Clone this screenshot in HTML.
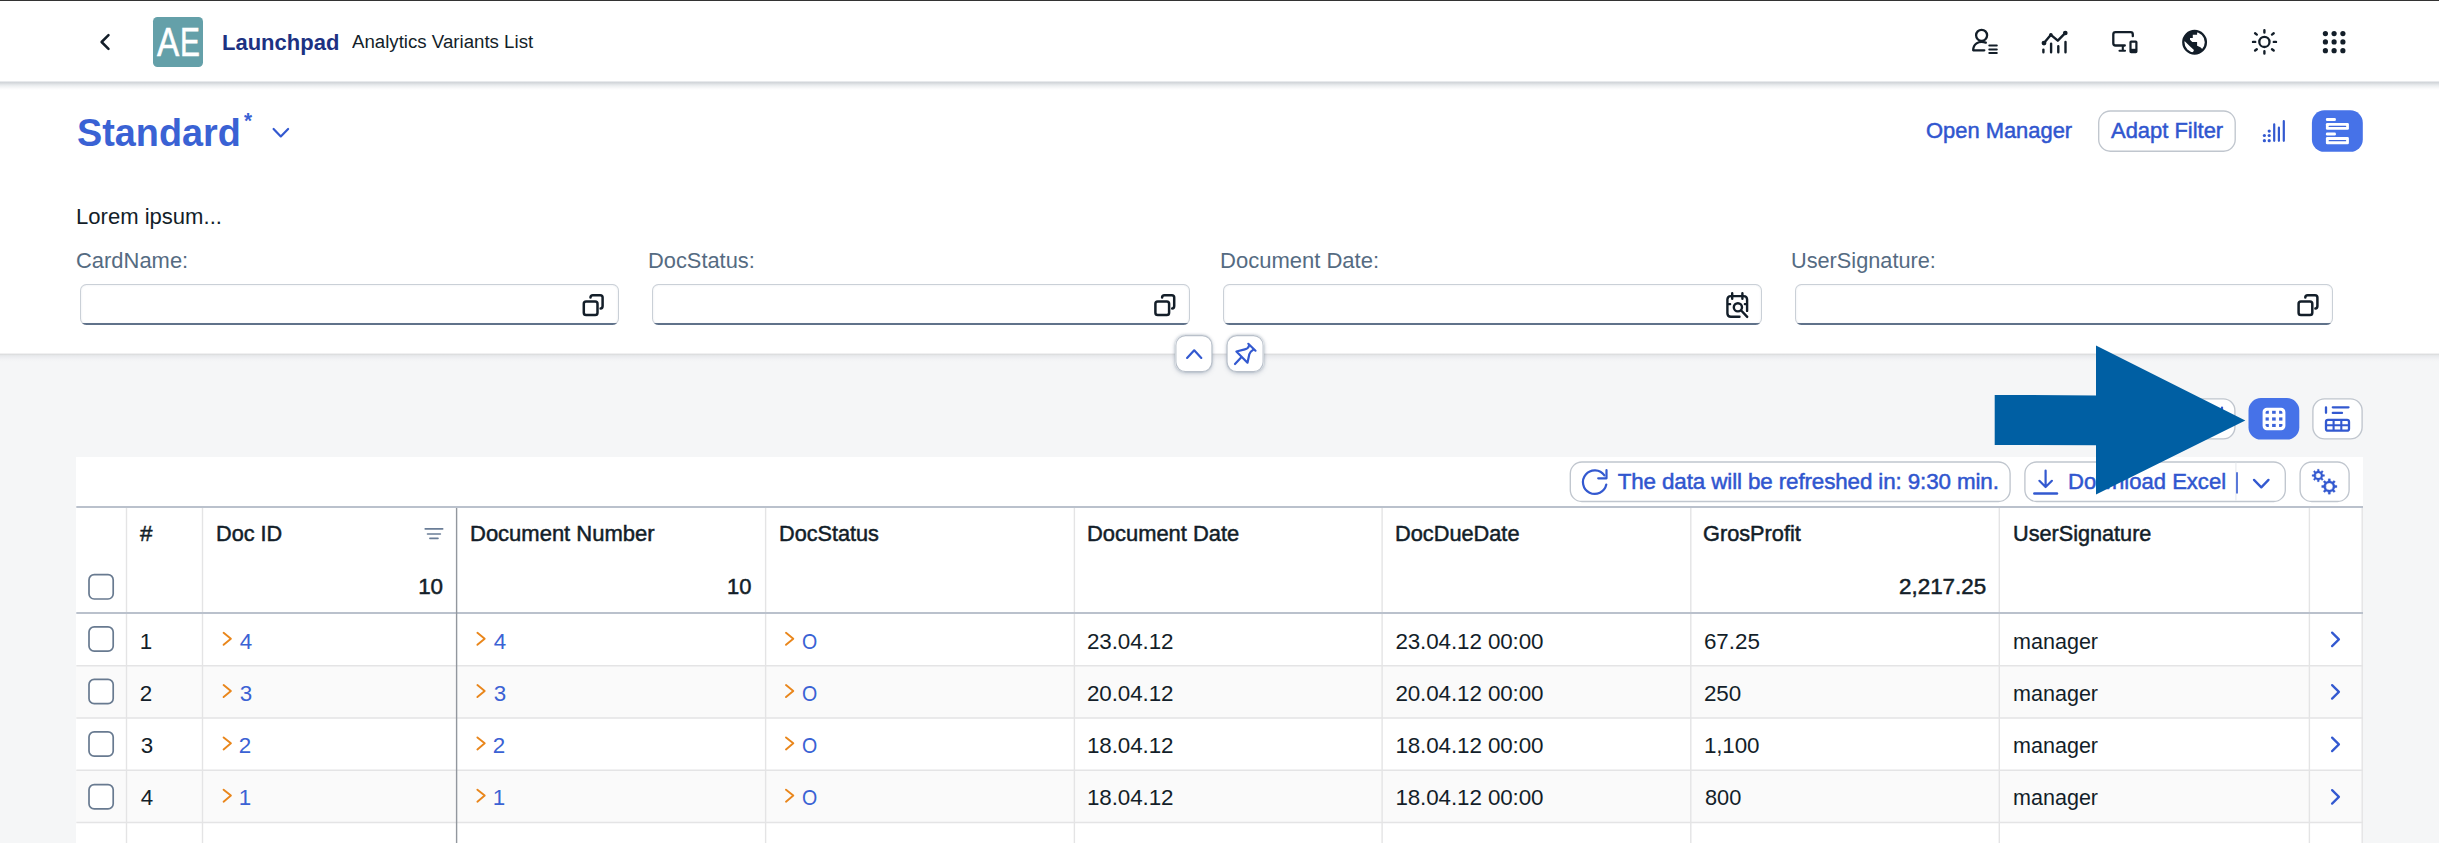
<!DOCTYPE html>
<html lang="en">
<head>
<meta charset="utf-8">
<title>Analytics Variants List</title>
<style>
html,body{margin:0;padding:0;}
body{width:2439px;height:843px;overflow:hidden;position:relative;background:#f5f6f7;font-family:"Liberation Sans",sans-serif;color:#131e29;}
.abs,.t,svg.i{position:absolute;}
.t{white-space:nowrap;line-height:1;}
.sb{-webkit-text-stroke:0.5px currentColor;}
#shell{left:0;top:0;width:2439px;height:81px;background:#fff;z-index:3;}
#shellsh{left:0;top:80px;width:2439px;height:10px;z-index:3;background:linear-gradient(#fff 0,#fff .8px,#e4e6e9 1.6px,#d2d6da 2.3px,#d5d8dc 3px,#e1e4e7 4.2px,#eef0f2 6px,#fafafb 8.5px,#fff 10px);}
#topline{left:0;top:0;width:2439px;height:1px;background:#333;z-index:4;}
#head{left:0;top:82px;width:2439px;height:271px;background:#fff;z-index:1;}
#headsh{left:0;top:352px;width:2439px;height:10px;z-index:1;background:linear-gradient(#fff 0,#fff .8px,#eeeeef 1.6px,#dcddde 2.4px,#e5e7e9 3.3px,#ecedf0 5px,#f2f3f5 7.5px,#f5f6f7 10px);}
#logo{left:152.5px;top:16.6px;width:50.7px;height:50.6px;border-radius:4.5px;background:#64a0a9;z-index:5;overflow:hidden;}
#logo span{position:absolute;top:5.6px;font-size:41.1px;line-height:1;color:#fff;transform-origin:0 0;-webkit-text-stroke:.6px #fff;}
.inp{box-sizing:border-box;height:40.9px;top:284.2px;width:538.6px;background:#fff;border-radius:6.5px;box-shadow:inset 0 0 0 1px rgba(85,107,129,.22),inset 0 0 2px 1px rgba(85,107,129,.16);overflow:hidden;z-index:2;}
.inp::after{content:"";position:absolute;left:0;right:0;bottom:0;height:2.2px;background:#60728a;}
.rbtn{width:37px;height:37px;top:335.1px;background:#fff;border-radius:10px;box-shadow:0 0 3px rgba(85,107,130,.45),0 2px 5px rgba(85,107,130,.22);z-index:3;}
#tbl{left:76.3px;top:457px;width:2286.7px;height:386px;background:#fff;}
.alt{left:76.3px;width:2286.7px;height:51.4px;background:#fafafa;}
.z5{z-index:5;}
</style>
</head>
<body>
<!-- shell bar -->
<div id="topline" class="abs"></div>
<div id="shell" class="abs"></div>
<div id="shellsh" class="abs"></div>
<div id="logo" class="abs"><span style="left:4.6px;transform:scaleX(.81)">A</span><span style="left:27.1px;transform:scaleX(.725)">E</span></div>
<!-- dynamic page header -->
<div id="head" class="abs"></div>
<div id="headsh" class="abs"></div>
<div class="abs inp" style="left:80px"></div>
<div class="abs inp" style="left:651.6px"></div>
<div class="abs inp" style="left:1223.2px"></div>
<div class="abs inp" style="left:1794.8px"></div>
<div class="abs rbtn" style="left:1175.4px"></div>
<div class="abs rbtn" style="left:1226.6px"></div>
<!-- table -->
<div id="tbl" class="abs"></div>
<div class="abs alt" style="top:666px;height:52px"></div>
<div class="abs alt" style="top:770px;height:52px"></div>
<svg class="i" style="left:0;top:0;z-index:5" width="2439" height="843" viewBox="0 0 2439 843" fill="none" stroke-linecap="round" stroke-linejoin="round">
<!-- table grid lines -->
<g stroke-linecap="butt">
<path d="M76.3 665.8 H2363 M76.3 718 H2363 M76.3 770.3 H2363 M76.3 822.5 H2363" stroke="#e4e4e5" stroke-width="1.5"/>
<path d="M126.5 508 V843 M202.5 508 V843 M765.6 508 V843 M1074.4 508 V843 M1382.1 508 V843 M1690.8 508 V843 M1999.3 508 V843 M2309.4 508 V843 M2362.2 508 V843" stroke="#e4e4e5" stroke-width="1.4"/>
<path d="M76.3 507 H2363 M76.3 613.1 H2363" stroke="#bac1cc" stroke-width="2"/>
<path d="M456.6 508 V843" stroke="#92979e" stroke-width="1.4"/>
</g>
<!-- outlines: buttons, toggles, checkboxes -->
<g stroke="#c0c6ce" stroke-width="1.35" fill="#fff" stroke-linecap="butt">
<rect x="2098.7" y="111" width="136.5" height="40.2" rx="11.6"/>
<rect x="2185.7" y="398.9" width="49.2" height="40" rx="11.6"/>
<rect x="2312.9" y="398.9" width="49.2" height="40" rx="11.6"/>
<rect x="1570.3" y="462" width="439.8" height="39.5" rx="11.6"/>
<rect x="2024.9" y="462" width="260.4" height="39.5" rx="11.6"/>
<rect x="2300.1" y="462" width="49" height="39.5" rx="11.6"/>
</g>
<g fill="#4672e8" stroke="none">
<rect x="2311.9" y="110.3" width="50.9" height="41.5" rx="12.4"/>
<rect x="2248.5" y="398" width="50.8" height="41.6" rx="12.4"/>
</g>
<path d="M2235.9 463 V500.5" stroke="#e9ecef" stroke-width="1.2"/>
<path d="M2237 472.2 V493.6" stroke="#3359d0" stroke-width="1.6" stroke-linecap="butt"/>
<g stroke="#b9c0ca" stroke-width="1.1" fill="none"><rect x="1175.9" y="335.6" width="36" height="36" rx="9.6"/><rect x="1227.1" y="335.6" width="36" height="36" rx="9.6"/></g>
<g stroke="#687a90" stroke-width="1.7" fill="#fff">
<rect x="89" y="574.7" width="24.2" height="24.3" rx="5.2"/>
<rect x="89" y="626.9" width="24.2" height="24.3" rx="5.2"/>
<rect x="89" y="679.4" width="24.2" height="24.3" rx="5.2"/>
<rect x="89" y="731.9" width="24.2" height="24.3" rx="5.2"/>
<rect x="89" y="784.6" width="24.2" height="24.3" rx="5.2"/>
</g>
<!-- shell: back -->
<path d="M108.5 35.2 L101.6 42 L108.5 48.9" stroke="#131e29" stroke-width="2.5"/>
<g stroke="#131e29" stroke-width="2.3">
<!-- user list -->
<circle cx="1981.6" cy="35.3" r="5.5"/>
<path d="M1985.8 42.6 C1978 40.2 1973.2 44.5 1973.2 50.3 L1984.3 50.3"/>
<path d="M1989.3 45.6 H1996.8 M1989.3 49.4 H1996.8 M1989.3 53.1 H1996.8" stroke-width="2"/>
<!-- chart -->
<path d="M2044 43.1 L2050.9 34.8 L2057.8 40.7 L2065.4 32.9" stroke-width="2.4"/>
<circle cx="2044" cy="43.1" r="1.3" fill="#131e29"/><circle cx="2065.3" cy="33" r="1.2" fill="#131e29"/><circle cx="2050.9" cy="34.9" r=".7" fill="#131e29"/>
<path d="M2043.4 49.6 V52.3 M2051.1 43.6 V52.3 M2058.3 46.2 V52.3 M2065.5 41.9 V52.3" stroke-width="2.4"/>
<!-- devices -->
<path d="M2132.8 36.2 V34.4 Q2132.8 32.2 2130.6 32.2 H2115.5 Q2113.3 32.2 2113.3 34.4 V43.3 Q2113.3 45.5 2115.5 45.5 H2124.8"/>
<path d="M2122.8 46.5 V50.5 M2119.5 50.7 H2125" stroke-width="2.1"/>
<rect x="2130.5" y="41.6" width="5.9" height="10.6" rx=".6" stroke-width="2.2"/>
<rect x="2130.5" y="48.8" width="5.9" height="3.4" fill="#131e29" stroke="none"/>
<!-- globe -->
<circle cx="2194.6" cy="42.2" r="11.3"/>
<!-- sun -->
<circle cx="2264.4" cy="41.9" r="5.1"/>
<path d="M2264.4 30.3 V32.5 M2264.4 51.3 V53.5 M2253 41.9 H2255.2 M2273.8 41.9 H2276 M2255.1 33.3 L2256.8 34.6 M2273.7 33.3 L2272 34.6 M2255.1 50.5 L2256.8 49.2 M2273.7 50.5 L2272 49.2" stroke-width="2.4"/>
</g>
<clipPath id="gc"><circle cx="2194.6" cy="42.2" r="11.3"/></clipPath>
<polygon clip-path="url(#gc)" fill="#131e29" points="2197.1,28 2197.1,34.8 2192.8,34.8 2192.8,38.1 2190,38.1 2190,39.8 2192.3,41.9 2197.1,41.9 2197.1,45.7 2200.4,47.2 2203.3,50 2209,56 2193,56 2192.8,52.4 2194,50 2190.4,46.7 2181,37.7 2181,28"/>
<!-- grid dots -->
<g fill="#131e29">
<circle cx="2325.4" cy="33.6" r="2.6"/><circle cx="2334.1" cy="33.6" r="2.6"/><circle cx="2342.9" cy="33.6" r="2.6"/>
<circle cx="2325.4" cy="41.9" r="2.6"/><circle cx="2334.1" cy="41.9" r="2.6"/><circle cx="2342.9" cy="41.9" r="2.6"/>
<circle cx="2325.4" cy="50.7" r="2.6"/><circle cx="2334.1" cy="50.7" r="2.6"/><circle cx="2342.9" cy="50.7" r="2.6"/>
</g>
<!-- title chevron -->
<path d="M273.6 129 L280.8 136.4 L288.1 129" stroke="#3359d0" stroke-width="2.2"/>
<!-- bar chart icon -->
<g fill="#3359d0"><circle cx="2264.4" cy="135.5" r="1.6"/><circle cx="2264.4" cy="140.7" r="1.6"/><circle cx="2269.2" cy="131.1" r="1.6"/><circle cx="2269.2" cy="135.5" r="1.6"/><circle cx="2269.2" cy="140.7" r="1.6"/></g>
<path d="M2274.2 124.3 V140.8 M2278.9 127.7 V140.8 M2283.8 121.2 V140.8" stroke="#3359d0" stroke-width="2.2"/>
<!-- horizontal bars (white on blue) -->
<g fill="#fff"><rect x="2325.9" y="118" width="10" height="2.9" rx="1.2"/><rect x="2325.9" y="122.9" width="23" height="6.9" rx="1.3"/><rect x="2325.9" y="132.6" width="10" height="2.9" rx="1.2"/><rect x="2325.9" y="137.1" width="23" height="7.1" rx="1.3"/></g>
<path d="M2329.2 126.4 H2345.6 M2329.2 140.7 H2345.6" stroke="#3f66dc" stroke-width="1.3"/>
<!-- value help icons -->
<g id="vh" stroke="#131e29" stroke-width="2.5">
<rect x="583.8" y="301.4" width="13.7" height="13.7" rx="2.3"/>
<path d="M590.5 297.6 Q590.5 295.2 592.9 295.2 H600.2 Q602.6 295.2 602.6 297.6 V306.1 Q602.6 308.5 600.6 308.5"/>
</g>
<use href="#vh" x="571.6"/><use href="#vh" x="1714.8"/>
<!-- calendar search -->
<g stroke="#131e29" stroke-width="2.4">
<path d="M1747.1 310.9 V299.6 Q1747.1 296.1 1743.6 296.1 H1730.9 Q1727.4 296.1 1727.4 299.6 V313.3 Q1727.4 316.8 1730.9 316.8 H1739.5"/>
<path d="M1732.2 293.2 V298.7 M1742.4 293.2 V298.7"/>
<path d="M1728.6 304.2 H1730.2 M1744.8 304.2 H1746.4" stroke-width="2.2"/>
<circle cx="1737.9" cy="307.3" r="4.1"/>
<path d="M1741.2 310.5 L1747.2 316.9"/>
</g>
<!-- collapse + pin -->
<g stroke="#3359d0" stroke-width="2.2">
<path d="M1187.1 357.9 L1194.2 350.3 L1201.3 357.9"/>
<path d="M1248.3 343.8 L1255.5 350.7"/>
<path d="M1249 345.6 C1248.6 347.6 1247 349 1244.8 349.4 L1236.4 351.5 L1247.5 362.7 L1249.3 354.2 C1249.7 352.3 1251 351 1253.4 349.6"/>
<path d="M1241.1 357.4 L1235 364"/>
</g>
<!-- table view toggle icons -->
<rect x="2262.6" y="407.8" width="22.8" height="22.5" rx="4.2" fill="#fff"/>
<g fill="#3d64da">
<path d="M2265.6 413.8 V412.6 Q2265.6 410.8 2267.4 410.8 H2268.8 V413.8Z"/><rect x="2272.1" y="410.8" width="3.6" height="3"/><path d="M2279.1 410.8 H2280.6 Q2282.4 410.8 2282.4 412.6 V413.8 H2279.1Z"/>
<rect x="2265.6" y="417.4" width="3.2" height="3.2"/><rect x="2272.1" y="417.4" width="3.6" height="3.2"/><rect x="2279.1" y="417.4" width="3.3" height="3.2"/>
<path d="M2265.6 423.9 H2268.8 V427 H2267.4 Q2265.6 427 2265.6 425.2Z"/><rect x="2272.1" y="423.9" width="3.6" height="3.1"/><path d="M2279.1 423.9 H2282.4 V425.2 Q2282.4 427 2280.6 427 H2279.1Z"/>
</g>
<g stroke="#3359d0" stroke-width="2.3">
<path d="M2326 407.3 V412.8 M2332.8 407.3 H2348.5 M2332.8 412.9 H2342"/>
<rect x="2326" y="419.8" width="23" height="10.9" rx="2"/>
<path d="M2326 425.3 H2349 M2333.6 419.8 V430.7 M2341.3 419.8 V430.7" stroke-width="2.1" stroke-linecap="butt"/>
</g>
<!-- hidden toggle glyph -->
<path d="M2222 407.6 V430" stroke="#3359d0" stroke-width="2.2"/>
<!-- refresh -->
<g stroke="#3359d0" stroke-width="2.2">
<path d="M1606.3 484.6 A11.8 11.8 0 1 1 1604.4 475.3"/>
<path d="M1606.5 470.2 V478.3 H1598.2"/>
<!-- download -->
<path d="M2045.6 470.6 V486.8 M2039.4 480.8 L2045.6 487 L2051.9 480.8"/>
<path d="M2034.3 493.5 H2057" stroke-width="2.4"/>
<path d="M2254 479.9 L2261.3 487.4 L2268.5 479.9" stroke-width="2.3"/>
</g>
<!-- gears -->
<path fill="#3359d0" fill-rule="evenodd" stroke="#3359d0" stroke-width=".3" stroke-linejoin="round" d="M2317.37 471.00 L2317.46 469.26 L2319.14 469.26 L2319.23 471.00 L2320.83 471.66 L2322.12 470.49 L2323.31 471.68 L2322.14 472.97 L2322.80 474.57 L2324.54 474.66 L2324.54 476.34 L2322.80 476.43 L2322.14 478.03 L2323.31 479.32 L2322.12 480.51 L2320.83 479.34 L2319.23 480.00 L2319.14 481.74 L2317.46 481.74 L2317.37 480.00 L2315.77 479.34 L2314.48 480.51 L2313.29 479.32 L2314.46 478.03 L2313.80 476.43 L2312.06 476.34 L2312.06 474.66 L2313.80 474.57 L2314.46 472.97 L2313.29 471.68 L2314.48 470.49 L2315.77 471.66Z M2315.70 475.50 a2.6 2.6 0 1 0 5.2 0 a2.6 2.6 0 1 0 -5.2 0Z"/>
<path fill="#3359d0" fill-rule="evenodd" stroke="#3359d0" stroke-width=".3" stroke-linejoin="round" d="M2328.14 480.92 L2328.27 478.87 L2330.33 478.87 L2330.46 480.92 L2332.43 481.74 L2333.97 480.38 L2335.42 481.83 L2334.06 483.37 L2334.88 485.34 L2336.93 485.47 L2336.93 487.53 L2334.88 487.66 L2334.06 489.63 L2335.42 491.17 L2333.97 492.62 L2332.43 491.26 L2330.46 492.08 L2330.33 494.13 L2328.27 494.13 L2328.14 492.08 L2326.17 491.26 L2324.63 492.62 L2323.18 491.17 L2324.54 489.63 L2323.72 487.66 L2321.67 487.53 L2321.67 485.47 L2323.72 485.34 L2324.54 483.37 L2323.18 481.83 L2324.63 480.38 L2326.17 481.74Z M2325.75 486.50 a3.55 3.55 0 1 0 7.1 0 a3.55 3.55 0 1 0 -7.1 0Z"/>
<!-- column filter icon -->
<path d="M425.2 528.9 H442.7 M427.5 534 H440.4 M429.9 538.4 H438" stroke="#6a7d97" stroke-width="1.6"/>
<!-- row link chevrons -->
<g id="oc" stroke="#e9861b" stroke-width="1.9"><path d="M223.6 632.8 L230.9 638.7 L223.6 644.8"/><path d="M477.4 632.8 L484.7 638.7 L477.4 644.8"/><path d="M786 632.8 L793.3 638.7 L786 644.8"/></g>
<use href="#oc" y="52.3"/><use href="#oc" y="104.6"/><use href="#oc" y="156.9"/>
<g id="nv" stroke="#3359d0" stroke-width="2.3"><path d="M2332.1 632.6 L2338.9 639.4 L2332.1 646.1"/></g>
<use href="#nv" y="52.5"/><use href="#nv" y="105"/><use href="#nv" y="157.5"/>
</svg>
<!-- big annotation arrow -->
<svg class="i" style="left:1990px;top:340px;z-index:6" width="260" height="160" viewBox="1990 340 260 160"><polygon points="1994.7,394.9 2096,395.4 2096,345.4 2245.3,420.6 2096,494.6 2096,445.2 1994.7,445" fill="#005fa3"/></svg>

<div id="txt" class="abs z5" style="left:0;top:0">
<span class="t" style="left:222.02px;top:32.00px;font-size:22.4px;color:#1d3282;font-weight:700;transform:scaleX(0.9826);transform-origin:0 0;">Launchpad</span>
<span class="t" style="left:352.00px;top:32.00px;font-size:19.2px;color:#131e29;transform:scaleX(0.9726);transform-origin:0 0;">Analytics Variants List</span>
<span class="t" style="left:76.62px;top:114.00px;font-size:38.4px;color:#3a62d4;font-weight:700;transform:scaleX(0.9844);transform-origin:0 0;">Standard</span>
<span class="t" style="left:243.90px;top:110.00px;font-size:22.4px;color:#3a62d4;font-weight:700;transform:scaleX(0.9222);transform-origin:0 0;">*</span>
<span class="t sb" style="left:1926.02px;top:120.00px;font-size:22.4px;color:#3056cf;transform:scaleX(0.9784);transform-origin:0 0;">Open Manager</span>
<span class="t sb" style="left:2110.70px;top:120.00px;font-size:22.4px;color:#3056cf;transform:scaleX(0.9797);transform-origin:0 0;">Adapt Filter</span>
<span class="t" style="left:75.91px;top:206.00px;font-size:22.4px;color:#131e29;transform:scaleX(0.9852);transform-origin:0 0;">Lorem ipsum...</span>
<span class="t" style="left:76.02px;top:250.00px;font-size:22.4px;color:#556b82;transform:scaleX(0.9799);transform-origin:0 0;">CardName:</span>
<span class="t" style="left:648.13px;top:250.00px;font-size:22.4px;color:#556b82;transform:scaleX(0.9749);transform-origin:0 0;">DocStatus:</span>
<span class="t" style="left:1219.72px;top:250.00px;font-size:22.4px;color:#556b82;transform:scaleX(0.9833);transform-origin:0 0;">Document Date:</span>
<span class="t" style="left:1790.83px;top:250.00px;font-size:22.4px;color:#556b82;transform:scaleX(0.9699);transform-origin:0 0;">UserSignature:</span>
<span class="t sb" style="left:1617.70px;top:471.00px;font-size:22.4px;color:#3056cf;letter-spacing:-0.118px;">The data will be refreshed in: 9:30 min.</span>
<span class="t sb" style="left:2067.92px;top:471.00px;font-size:22.4px;color:#3056cf;transform:scaleX(0.9844);transform-origin:0 0;">Download Excel</span>
<span class="t sb" style="left:140.10px;top:523.00px;font-size:22.4px;color:#131e29;">#</span>
<span class="t sb" style="left:215.83px;top:523.00px;font-size:22.4px;color:#131e29;transform:scaleX(0.9664);transform-origin:0 0;">Doc ID</span>
<span class="t sb" style="left:470.12px;top:523.00px;font-size:22.4px;color:#131e29;transform:scaleX(0.9821);transform-origin:0 0;">Document Number</span>
<span class="t sb" style="left:778.63px;top:523.00px;font-size:22.4px;color:#131e29;transform:scaleX(0.9677);transform-origin:0 0;">DocStatus</span>
<span class="t sb" style="left:1087.42px;top:523.00px;font-size:22.4px;color:#131e29;transform:scaleX(0.9785);transform-origin:0 0;">Document Date</span>
<span class="t sb" style="left:1395.43px;top:523.00px;font-size:22.4px;color:#131e29;transform:scaleX(0.9713);transform-origin:0 0;">DocDueDate</span>
<span class="t sb" style="left:1703.43px;top:523.00px;font-size:22.4px;color:#131e29;transform:scaleX(0.9706);transform-origin:0 0;">GrosProfit</span>
<span class="t sb" style="left:2012.63px;top:523.00px;font-size:22.4px;color:#131e29;transform:scaleX(0.9670);transform-origin:0 0;">UserSignature</span>
<span class="t sb" style="left:418.20px;top:576.00px;font-size:22.4px;color:#131e29;letter-spacing:-0.153px;">10</span>
<span class="t sb" style="left:727.22px;top:576.00px;font-size:22.4px;color:#131e29;transform:scaleX(0.9807);transform-origin:0 0;">10</span>
<span class="t sb" style="left:1899.00px;top:576.00px;font-size:22.4px;color:#131e29;">2,217.25</span>
<span class="t" style="left:139.70px;top:631.00px;font-size:22.4px;color:#131e29;">1</span>
<span class="t" style="left:239.70px;top:631.00px;font-size:22.4px;color:#3a62d4;">4</span>
<span class="t" style="left:493.70px;top:631.00px;font-size:22.4px;color:#3a62d4;">4</span>
<span class="t" style="left:801.83px;top:631.00px;font-size:22.4px;color:#3a62d4;transform:scaleX(0.8750);transform-origin:0 0;">O</span>
<span class="t" style="left:1086.90px;top:631.00px;font-size:22.4px;color:#131e29;letter-spacing:-0.072px;">23.04.12</span>
<span class="t" style="left:1395.40px;top:631.00px;font-size:22.4px;color:#131e29;letter-spacing:-0.097px;">23.04.12 00:00</span>
<span class="t" style="left:1703.90px;top:631.00px;font-size:22.4px;color:#131e29;letter-spacing:0.030px;">67.25</span>
<span class="t" style="left:2012.94px;top:631.00px;font-size:22.4px;color:#131e29;transform:scaleX(0.9623);transform-origin:0 0;">manager</span>
<span class="t" style="left:139.70px;top:683.00px;font-size:22.4px;color:#131e29;">2</span>
<span class="t" style="left:239.70px;top:683.00px;font-size:22.4px;color:#3a62d4;">3</span>
<span class="t" style="left:493.70px;top:683.00px;font-size:22.4px;color:#3a62d4;">3</span>
<span class="t" style="left:801.83px;top:683.00px;font-size:22.4px;color:#3a62d4;transform:scaleX(0.8750);transform-origin:0 0;">O</span>
<span class="t" style="left:1086.90px;top:683.00px;font-size:22.4px;color:#131e29;letter-spacing:-0.072px;">20.04.12</span>
<span class="t" style="left:1395.40px;top:683.00px;font-size:22.4px;color:#131e29;letter-spacing:-0.097px;">20.04.12 00:00</span>
<span class="t" style="left:1703.90px;top:683.00px;font-size:22.4px;color:#131e29;">250</span>
<span class="t" style="left:2012.94px;top:683.00px;font-size:22.4px;color:#131e29;transform:scaleX(0.9623);transform-origin:0 0;">manager</span>
<span class="t" style="left:140.70px;top:735.00px;font-size:22.4px;color:#131e29;">3</span>
<span class="t" style="left:238.70px;top:735.00px;font-size:22.4px;color:#3a62d4;">2</span>
<span class="t" style="left:492.70px;top:735.00px;font-size:22.4px;color:#3a62d4;">2</span>
<span class="t" style="left:801.83px;top:735.00px;font-size:22.4px;color:#3a62d4;transform:scaleX(0.8750);transform-origin:0 0;">O</span>
<span class="t" style="left:1086.90px;top:735.00px;font-size:22.4px;color:#131e29;letter-spacing:-0.072px;">18.04.12</span>
<span class="t" style="left:1395.40px;top:735.00px;font-size:22.4px;color:#131e29;letter-spacing:-0.097px;">18.04.12 00:00</span>
<span class="t" style="left:1703.90px;top:735.00px;font-size:22.4px;color:#131e29;letter-spacing:-0.095px;">1,100</span>
<span class="t" style="left:2012.94px;top:735.00px;font-size:22.4px;color:#131e29;transform:scaleX(0.9623);transform-origin:0 0;">manager</span>
<span class="t" style="left:140.70px;top:787.00px;font-size:22.4px;color:#131e29;">4</span>
<span class="t" style="left:238.70px;top:787.00px;font-size:22.4px;color:#3a62d4;">1</span>
<span class="t" style="left:492.70px;top:787.00px;font-size:22.4px;color:#3a62d4;">1</span>
<span class="t" style="left:801.83px;top:787.00px;font-size:22.4px;color:#3a62d4;transform:scaleX(0.8750);transform-origin:0 0;">O</span>
<span class="t" style="left:1086.90px;top:787.00px;font-size:22.4px;color:#131e29;letter-spacing:-0.072px;">18.04.12</span>
<span class="t" style="left:1395.40px;top:787.00px;font-size:22.4px;color:#131e29;letter-spacing:-0.097px;">18.04.12 00:00</span>
<span class="t" style="left:1704.90px;top:787.00px;font-size:22.4px;color:#131e29;transform:scaleX(0.9728);transform-origin:0 0;">800</span>
<span class="t" style="left:2012.94px;top:787.00px;font-size:22.4px;color:#131e29;transform:scaleX(0.9623);transform-origin:0 0;">manager</span>
</div>
</body>
</html>
